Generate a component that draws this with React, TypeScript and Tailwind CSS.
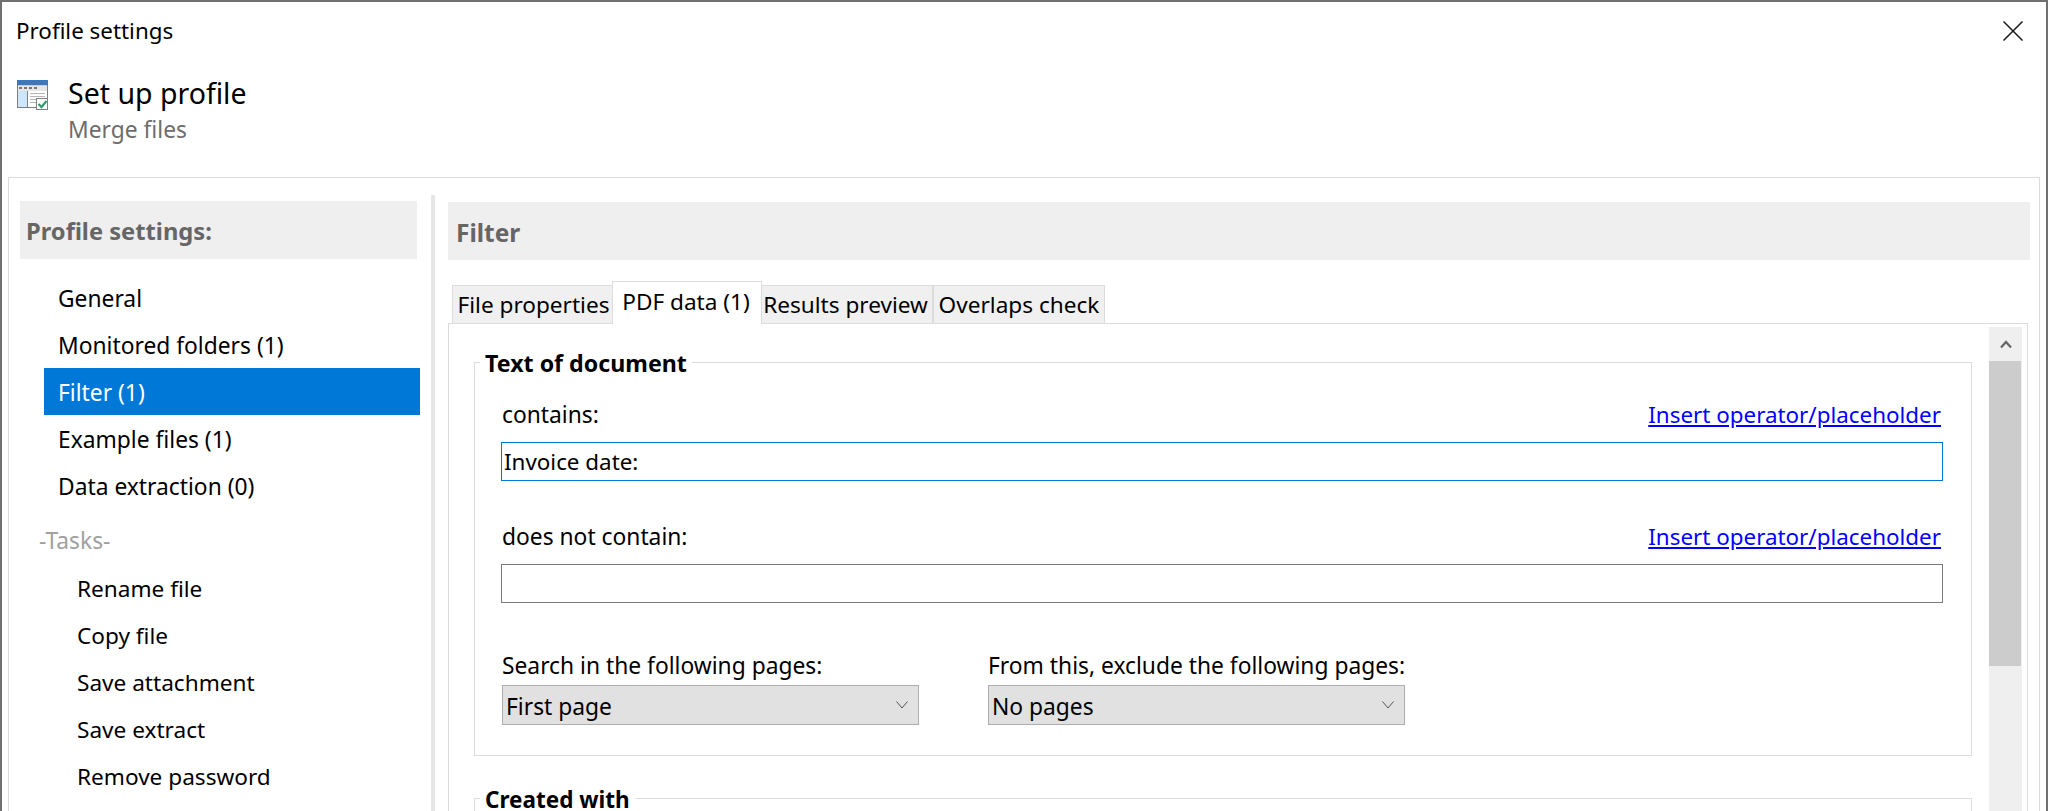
import React from "react";

const navItems = ["General", "Monitored folders (1)", "Filter (1)", "Example files (1)", "Data extraction (0)"];
const taskItems = ["Rename file", "Copy file", "Save attachment", "Save extract", "Remove password"];

const ProfileIcon = () => (
  <svg width="32" height="31" viewBox="0 0 32 31" className="shrink-0">
    <rect x="0.5" y="0.5" width="30" height="27" fill="#fff" stroke="#7f7f7f" />
    <rect x="0" y="0" width="31" height="5.5" fill="#3f78b8" />
    <rect x="1" y="5.5" width="29" height="5.5" fill="#e6e6e6" />
    <rect x="2" y="7" width="3" height="2" fill="#777" />
    <rect x="7" y="7" width="3" height="2" fill="#777" />
    <rect x="12" y="7" width="3" height="2" fill="#777" />
    <rect x="17" y="7" width="3" height="2" fill="#777" />
    <rect x="1" y="11" width="9.5" height="16" fill="#cde6fb" />
    <path d="M10.5 11v16" stroke="#7f7f7f" />
    <path d="M13 13.5h15M13 16.5h15M13 19.5h15M13 22.5h6" stroke="#b5b5b5" />
    <rect x="19.5" y="18.5" width="11" height="11" fill="#fff" stroke="#7f7f7f" />
    <path d="M21.5 24l3 3 5-6" fill="none" stroke="#2e9c6e" strokeWidth="2.2" />
  </svg>
);

const Tab = ({ label, w, active }: { label: string; w: string; active?: boolean }) =>
  active ? (
    <div className={`${w} h-[43px] -mb-px z-10 -mx-px whitespace-nowrap border border-b-0 border-[#dcdcdc] bg-white pr-[2px] pt-[5px] text-center text-[22.6px] leading-[30px] text-black`}>
      {label}
    </div>
  ) : (
    <div className={`${w} h-[38px] whitespace-nowrap border border-b-0 border-[#dcdcdc] bg-[#f0f0f0] text-center text-[22.6px] leading-[38px] text-black`}>
      {label}
    </div>
  );

const Dropdown = ({ value }: { value: string }) => (
  <div className="flex h-[40px] w-[417px] items-center justify-between border border-[#adadad] bg-[#e1e1e1] pl-[3px] pr-[10px]">
    <span className="pt-[4px]">{value}</span>
    <svg width="12" height="8" viewBox="0 0 12 8" fill="none">
      <path d="M0.5 0.5l5.5 6.5 5.5-6.5" stroke="#555" />
    </svg>
  </div>
);

const InsertLink = () => <span className="text-[22.4px] text-[#0000ff] underline">Insert operator/placeholder</span>;

export default function App() {
  return (
    <div
      className="flex h-[811px] w-[2048px] flex-col overflow-hidden border-x-2 border-t-2 border-[#707070] bg-white text-[22.8px] text-black"
      style={{ fontFamily: '"Noto Sans", sans-serif' }}
    >
      <div className="flex h-[58px] shrink-0 items-center justify-between pl-[14px] pr-[23px]">
        <span className="text-[22.4px]">Profile settings</span>
        <svg width="20" height="20" viewBox="0 0 20 20" fill="none">
          <path d="M0.5 0.5l19 19M19.5 0.5l-19 19" stroke="#1a1a1a" strokeWidth="1.5" />
        </svg>
      </div>

      <div className="flex h-[117px] shrink-0 pl-[15px]">
        <div className="mt-[20px]">
          <ProfileIcon />
        </div>
        <div className="ml-[19px] mt-[14px]">
          <div className="text-[28.5px] leading-[38px]">Set up profile</div>
          <div className="mt-[2px] text-[22.8px] leading-[32px] text-[#6d6d6d]">Merge files</div>
        </div>
      </div>

      <div className="mx-[6px] flex min-h-0 flex-1 border border-b-0 border-[#dcdcdc] pl-[11px]">
        <aside className="w-[411px] shrink-0 pt-[23px]">
          <div className="flex h-[58px] w-[397px] items-center bg-[#efefef] pl-[6px] pt-[4px] text-[23.7px] font-bold text-[#666666]">
            Profile settings:
          </div>
          <ul className="mt-[15px] w-[400px]">
            {navItems.map((item) => (
              <li
                key={item}
                className={`ml-[24px] h-[47px] pl-[14px] leading-[49px] ${item === "Filter (1)" ? "bg-[#0078d7] text-white" : ""}`}
              >
                {item}
              </li>
            ))}
            <li className="ml-[24px] mt-[9px] h-[47px] leading-[45px] text-[#a0a0a0]">
              <span className="-ml-[5px]">-Tasks-</span>
            </li>
            {taskItems.map((item) => (
              <li key={item} className="ml-[24px] h-[47px] pl-[33px] text-[22.6px] leading-[47px]">
                {item}
              </li>
            ))}
          </ul>
        </aside>

        <div className="mt-[17px] w-[4px] shrink-0 bg-[#e6e6e6]" />

        <main className="ml-[13px] flex min-w-0 flex-1 flex-col pr-[9px] pt-[24px]">
          <div className="flex h-[58px] shrink-0 items-center bg-[#efefef] pl-[8px] pt-[4px] text-[24.5px] font-bold text-[#666666]">
            Filter
          </div>

          <div className="mt-[21px] flex h-[42px] shrink-0 items-end pl-[4px]">
            <Tab label="File properties" w="w-[161px] pl-[2px]" />
            <Tab label="PDF data (1)" w="w-[150px]" active />
            <Tab label="Results preview" w="w-[172px] pr-[3px]" />
            <Tab label="Overlaps check" w="w-[172px]" />
          </div>

          <div className="mr-[2px] flex min-h-0 flex-1 border border-b-0 border-[#dcdcdc]">
            <div className="min-w-0 flex-1 overflow-hidden pl-[25px] pr-[17px] pt-[22px]">
              <fieldset className="border border-[#dcdcdc] pb-[30px] pl-[26px] pr-[28px]">
                <legend className="-ml-[21px] px-[5px] pt-[2px] text-[23.2px] font-bold leading-[30px]">Text of document</legend>
                <div className="mt-[22px] flex h-[30px] items-center justify-between pl-px pr-[2px]">
                  <span>contains:</span>
                  <InsertLink />
                </div>
                <input
                  readOnly
                  value="Invoice date:"
                  className="mt-[12px] block h-[39px] w-full border border-[#0078d7] px-[2px] text-[22.4px] outline-none"
                />
                <div className="mt-[41px] flex h-[30px] items-center justify-between pl-px pr-[2px]">
                  <span>does not contain:</span>
                  <InsertLink />
                </div>
                <input readOnly className="mt-[12px] block h-[39px] w-full border border-[#7a7a7a] px-[2px] outline-none" />
                <div className="mt-[48px] flex gap-[69px] pl-px">
                  <div>
                    <div className="h-[30px] leading-[30px]">Search in the following pages:</div>
                    <div className="mt-[4px]">
                      <Dropdown value="First page" />
                    </div>
                  </div>
                  <div>
                    <div className="h-[30px] leading-[30px]">From this, exclude the following pages:</div>
                    <div className="mt-[4px]">
                      <Dropdown value="No pages" />
                    </div>
                  </div>
                </div>
              </fieldset>

              <fieldset className="mt-[29px] h-[100px] border border-[#dcdcdc] pl-[26px]">
                <legend className="-ml-[21px] px-[5px] pt-[4px] text-[22.5px] font-bold leading-[22px]">Created with</legend>
              </fieldset>
            </div>

            <div className="mr-[5px] mt-[3px] flex w-[33px] shrink-0 flex-col bg-[#efefef]">
              <div className="flex h-[34px] items-center justify-center">
                <svg width="12" height="10" viewBox="0 0 12 10" fill="none">
                  <path d="M1 8.5l5-5.5 5 5.5" stroke="#666" strokeWidth="2.2" />
                </svg>
              </div>
              <div className="h-[305px] w-[32px] bg-[#cccccc]" />
            </div>
          </div>
        </main>
      </div>
    </div>
  );
}
